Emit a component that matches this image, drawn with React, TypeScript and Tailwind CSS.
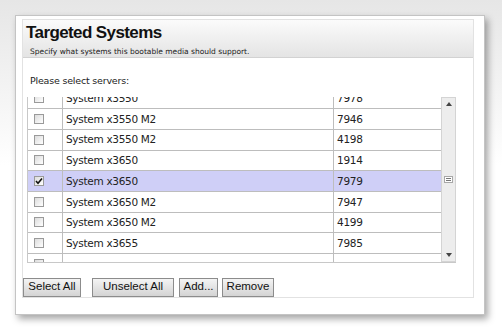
import React from 'react';

type Server = { name: string; id: string; checked?: boolean };

const SERVERS: Server[] = [
  { name: 'System x3550', id: '7978' },
  { name: 'System x3550 M2', id: '7946' },
  { name: 'System x3550 M2', id: '4198' },
  { name: 'System x3650', id: '1914' },
  { name: 'System x3650', id: '7979', checked: true },
  { name: 'System x3650 M2', id: '7947' },
  { name: 'System x3650 M2', id: '4199' },
  { name: 'System x3655', id: '7985' },
  { name: '', id: '' },
];

const Checkbox: React.FC<{ checked?: boolean }> = ({ checked }) => (
  <div className="w-[10px] h-[10px] border border-[#9a9a9a] bg-gradient-to-br from-[#dcdcdc] to-white flex items-center justify-center">
    {checked && (
      <svg width="8" height="8" viewBox="0 0 8 8">
        <path d="M1 4 L3 6.2 L7 1.5" fill="none" stroke="#111" strokeWidth="1.6" />
      </svg>
    )}
  </div>
);

const Button: React.FC<{ label: string; className: string }> = ({ label, className }) => (
  <button
    className={`${className} h-[19px] border border-[#8c8c8c] bg-gradient-to-b from-[#f4f4f4] to-[#d4d4d4] text-[11.5px] text-[#111] leading-none flex items-center justify-center`}
  >
    {label}
  </button>
);

const App: React.FC = () => {
  return (
    <div
      className="w-[502px] h-[331px] bg-gradient-to-b from-[#e6e6e6] via-white to-white pt-[15px] pl-[15px]"
      style={{ fontFamily: 'Tahoma, "DejaVu Sans", sans-serif' }}
    >
      <div className="w-[470px] h-[300px] bg-white border border-[#c4c4c4] shadow-[3px_4px_7px_rgba(0,0,0,0.35)] pl-[6px] pt-[3px]">
        <div className="w-[452px] h-[279px] border border-[#e2e2e2] flex flex-col">
          {/* header */}
          <div className="h-[38px] bg-gradient-to-b from-[#fbfbfb] to-[#e4e4e4] border-b border-[#d2d2d2] pl-[3px] flex flex-col">
            <div
              className="text-[17px] font-bold text-[#111] leading-none mt-[4px] tracking-[-0.6px]"
              style={{ fontFamily: '"Liberation Sans", Arial, sans-serif' }}
            >
              Targeted Systems
            </div>
            <div className="text-[7.5px] text-[#222] leading-none mt-[7px] pl-[4px]">
              Specify what systems this bootable media should support.
            </div>
          </div>

          {/* body */}
          <div className="pl-[7px] pt-[18px] text-[9.5px] text-[#222] leading-none tracking-[-0.2px]">
            Please select servers:
          </div>

          <div className="ml-[4px] mt-[11px] w-[429px] h-[166px] flex border-b border-[#c8c8c8]">
            <div className="w-[414px] h-full overflow-hidden border-l border-[#c8c8c8]">
              <div className="-mt-[8px]">
                {SERVERS.map((s, i) => (
                  <div
                    key={i}
                    className={`h-[20.7px] flex border-b border-[#bdbdbd] text-[10.5px] text-[#222] leading-none tracking-[-0.3px] ${s.checked ? 'bg-[#cfcff7]' : 'bg-white'}`}
                  >
                    <div className="w-[35px] flex items-center pl-[6px] border-r border-[#bdbdbd]">
                      <Checkbox checked={s.checked} />
                    </div>
                    <div className="w-[271px] flex items-center pl-[3px] border-r border-[#bdbdbd]">
                      {s.name}
                    </div>
                    <div className="flex-1 flex items-center pl-[3px]">{s.id}</div>
                  </div>
                ))}
              </div>
            </div>
            {/* scrollbar */}
            <div className="w-[15px] h-full bg-[#ededed] border border-[#d4d4d4] flex flex-col items-center justify-between py-[4px]">
              <svg width="6" height="4" viewBox="0 0 6 4">
                <path d="M0 4 L3 0 L6 4 Z" fill="#444" />
              </svg>
              <div className="w-[9px] h-[7px] border border-[#a8a8a8] bg-white flex flex-col justify-center gap-[1px] px-[1px]">
                <div className="h-px bg-[#777]" />
                <div className="h-px bg-[#777]" />
              </div>
              <svg width="6" height="4" viewBox="0 0 6 4">
                <path d="M0 0 L6 0 L3 4 Z" fill="#444" />
              </svg>
            </div>
          </div>

          <div
            className="flex mt-[15px] pl-[0px]"
            style={{ fontFamily: '"Liberation Sans", Arial, sans-serif' }}
          >
            <Button label="Select All" className="w-[58px]" />
            <Button label="Unselect All" className="w-[82px] ml-[11px]" />
            <Button label="Add..." className="w-[39px] ml-[5px]" />
            <Button label="Remove" className="w-[52px] ml-[4px]" />
          </div>
        </div>
      </div>
    </div>
  );
};

export default App;
